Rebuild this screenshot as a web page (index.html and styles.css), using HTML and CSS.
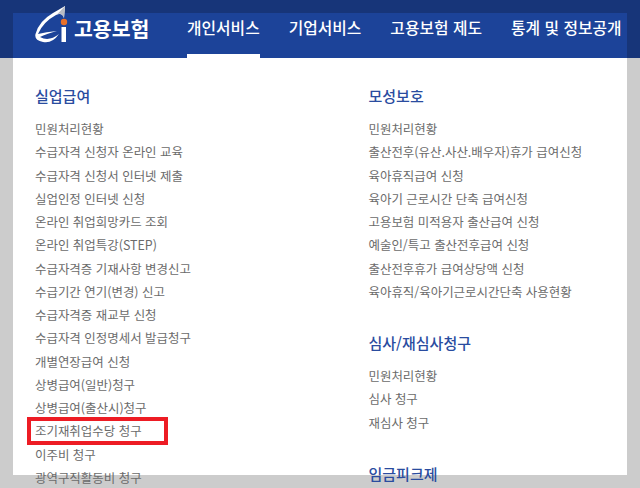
FILE: index.html
```html
<!DOCTYPE html>
<html lang="ko">
<head>
<meta charset="utf-8">
<title>고용보험</title>
<link rel="stylesheet" href="styles.css">
</head>
<body>
<div class="frame">
  <header class="head">
    <a class="brand">
      <svg class="logo" width="34" height="38" viewBox="0 0 34 38">
        <path d="M30 0 L29 12 Q27 6 21 9 Q8 16 3 28 Q11 26 22 25 Q11 28 5 31 Q14 36 24 28 Q17 38 8 36 Q-1 34 0.5 28 Q4 15 18 7 Q25 3 30 0Z" fill="#fff"/>
        <path d="M30 0 L29 12 Q27 6 22 8.500 Z" fill="#b9bcc4"/>
        <circle cx="29" cy="16" r="3.200" fill="#e8702a"/>
        <rect x="26.500" y="21" width="4.500" height="15" fill="#fff"/>
      </svg>
      <span class="brand-name">고용보험</span>
    </a>
    <nav class="nav">
      <a class="nav-item active">개인서비스</a>
      <a class="nav-item">기업서비스</a>
      <a class="nav-item">고용보험 제도</a>
      <a class="nav-item">통계 및 정보공개</a>
    </nav>
  </header>
  <main class="panel">
    <section class="col">
      <h2 class="title">실업급여</h2>
      <ul class="list">
        <li>민원처리현황</li>
        <li>수급자격 신청자 온라인 교육</li>
        <li>수급자격 신청서 인터넷 제출</li>
        <li>실업인정 인터넷 신청</li>
        <li>온라인 취업희망카드 조회</li>
        <li>온라인 취업특강(STEP)</li>
        <li>수급자격증 기재사항 변경신고</li>
        <li>수급기간 연기(변경) 신고</li>
        <li>수급자격증 재교부 신청</li>
        <li>수급자격 인정명세서 발급청구</li>
        <li>개별연장급여 신청</li>
        <li>상병급여(일반)청구</li>
        <li>상병급여(출산시)청구</li>
        <li class="marked">조기재취업수당 청구</li>
        <li>이주비 청구</li>
        <li>광역구직활동비 청구</li>
      </ul>
    </section>
    <section class="col col-last">
      <h2 class="title">모성보호</h2>
      <ul class="list">
        <li>민원처리현황</li>
        <li>출산전후(유산.사산.배우자)휴가 급여신청</li>
        <li>육아휴직급여 신청</li>
        <li>육아기 근로시간 단축 급여신청</li>
        <li>고용보험 미적용자 출산급여 신청</li>
        <li>예술인/특고 출산전후급여 신청</li>
        <li>출산전후휴가 급여상당액 신청</li>
        <li>육아휴직/육아기근로시간단축 사용현황</li>
      </ul>
      <h2 class="title next">심사/재심사청구</h2>
      <ul class="list">
        <li>민원처리현황</li>
        <li>심사 청구</li>
        <li>재심사 청구</li>
      </ul>
      <h2 class="title next">임금피크제</h2>
    </section>
  </main>
</div>
</body>
</html>
```
FILE: styles.css
```css
*, *::after { box-sizing: border-box; }
html, body { margin: 0; height: 488px; overflow: hidden; }
body {
  background: linear-gradient(#173579 58px, #cccccc 58px);
  font-family: "Noto Sans CJK KR", "Noto Sans", sans-serif;
}
.frame { padding: 13px 13px 0; }
.head {
  height: 45px;
  background: #1c4399;
  display: flex;
  color: #fff;
}
.brand { display: flex; align-items: flex-start; width: 174px; padding-left: 22px; margin-top: -7px; }
.logo { flex: none; }
.brand-name { font-size: 20.5px; font-weight: 700; line-height: 27px; margin: 9px 0 0 5px; white-space: nowrap; }
.nav { display: flex; gap: 29px; }
.nav-item {
  font-size: 15.8px;
  font-weight: 500;
  line-height: 20px;
  padding-top: 5px;
  height: 45px;
  white-space: nowrap;
}
.active { position: relative; }
.active::after {
  content: "";
  position: absolute;
  left: 0; right: 0; bottom: 0;
  height: 4px;
  background: #fff;
}
.panel {
  height: 417px;
  background: #fff;
  display: flex;
  padding: 27px 0 0 22px;
}
.col { width: 333.5px; flex: none; }
.col-last { width: auto; flex: 1; min-width: 0; }
.title {
  margin: 0;
  font-size: 15px;
  font-weight: 500;
  line-height: 22px;
  color: #2a4c9f;
}
.title.next { margin-top: 28px; }
.list { list-style: none; margin: 11px 0 0; padding: 0; }
.list li {
  font-size: 12.46px;
  line-height: 23.27px;
  height: 23.27px;
  color: #6b6b6b;
  white-space: nowrap;
}
.marked { position: relative; }
.marked::after {
  content: "";
  position: absolute;
  left: -8px; top: -3px;
  width: 141px; height: 28px;
  border: 4px solid #ed1c24;
}
```
